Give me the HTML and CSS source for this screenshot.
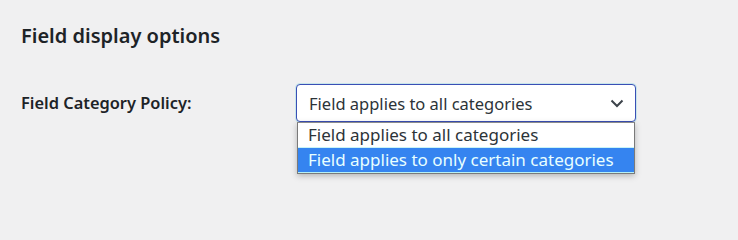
FILE: index.html
```html
<!DOCTYPE html>
<html>
<head>
<meta charset="utf-8">
<link rel="stylesheet" href="styles.css">
</head>
<body>
<div class="page">
  <h2 class="title">Field display options</h2>
  <div class="row">
    <div class="label">Field Category Policy:</div>
    <div class="selectwrap">
      <div class="select">
        <span class="value">Field applies to all categories</span>
        <svg class="chev" width="14" height="9" viewBox="0 0 14 9"><path d="M1.5 1.5 L7 7 L12.5 1.5" fill="none" stroke="#3c434a" stroke-width="2"/></svg>
      </div>
      <div class="list">
        <div class="opt">Field applies to all categories</div>
        <div class="opt sel">Field applies to only certain categories</div>
      </div>
    </div>
  </div>
</div>
</body>
</html>
```
FILE: styles.css
```css
html, body { margin: 0; padding: 0; }
body {
  background: #f0f0f1;
  width: 738px;
  height: 228px;
  overflow: hidden;
  font-family: "Noto Sans", "Open Sans", sans-serif;
  color: #1d2327;
}
.page { padding: 22px 0 0 21px; }
.title {
  margin: 0;
  font-size: 20px;
  font-weight: 600;
  line-height: 28px;
}
.row {
  display: flex;
  align-items: flex-start;
  margin-top: 34px;
}
.label {
  width: 275px;
  font-size: 16.4px;
  font-weight: 600;
  line-height: 38px;
}
.selectwrap { position: relative; width: 340px; }
.select {
  box-sizing: border-box;
  height: 38px;
  border: 1px solid #3a4fb5;
  border-radius: 4px;
  background: #fff;
  display: flex;
  align-items: center;
  justify-content: space-between;
  padding: 0 11px 0 12px;
  font-size: 16.5px;
  color: #2c3338;
  box-shadow: 0 0 0 1px rgba(80,200,220,0.25);
}
.chev { display: block; }
.list {
  position: absolute;
  left: 1px;
  top: 38px;
  width: 338px;
  box-sizing: border-box;
  border: 1px solid #7a7a7a;
  border-top-color: #8c8c8c;
  background: #fff;
  box-shadow: 0 2px 6px rgba(0,0,0,0.25);
}
.opt {
  font-size: 17px;
  line-height: 24px;
  padding: 0 10px;
  color: #2c3338;
  white-space: nowrap;
}
.opt.sel {
  background: #3584f0;
  color: #e8ffff;
  border-top: 1px solid #c8f4f8;
  border-bottom: 1px solid #b8f0f4;
}
```
